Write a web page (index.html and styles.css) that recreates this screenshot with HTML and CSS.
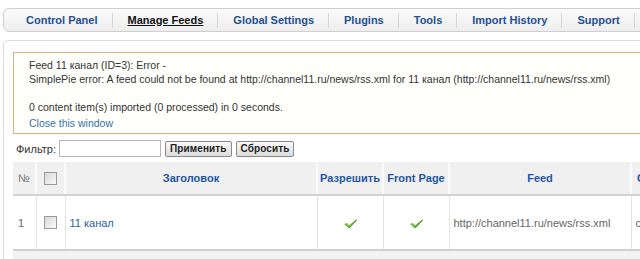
FILE: index.html
```html
<!DOCTYPE html>
<html>
<head>
<meta charset="utf-8">
<link rel="stylesheet" href="styles.css">
</head>
<body>
<div class="nav">
  <a class="nav-item">Control Panel</a>
  <a class="nav-item active">Manage Feeds</a>
  <a class="nav-item">Global Settings</a>
  <a class="nav-item">Plugins</a>
  <a class="nav-item">Tools</a>
  <a class="nav-item">Import History</a>
  <a class="nav-item">Support</a>
</div>
<div class="panel">
  <div class="message">
    <p>Feed 11 канал (ID=3): Error -</p>
    <p>SimplePie error: A feed could not be found at http://channel11.ru/news/rss.xml for 11 канал (http://channel11.ru/news/rss.xml)</p>
    <p>&nbsp;</p>
    <p>0 content item(s) imported (0 processed) in 0 seconds.</p>
    <p class="close"><a>Close this window</a></p>
  </div>
  <div class="filter">
    <span class="filter-label">Фильтр:</span>
    <input class="filter-input" type="text">
    <button class="btn">Применить</button>
    <button class="btn">Сбросить</button>
  </div>
  <table class="grid">
    <colgroup>
      <col class="c-num"><col class="c-chk"><col class="c-title"><col class="c-en"><col class="c-fp"><col class="c-feed"><col class="c-more">
    </colgroup>
    <thead>
      <tr>
        <th class="num">№</th>
        <th><span class="checkbox"></span></th>
        <th>Заголовок</th>
        <th>Разрешить</th>
        <th>Front Page</th>
        <th>Feed</th>
        <th class="more">C</th>
      </tr>
    </thead>
    <tbody>
      <tr>
        <td class="num">1</td>
        <td class="center"><span class="checkbox"></span></td>
        <td><a class="link">11 канал</a></td>
        <td class="center"><svg class="tick" width="15" height="11" viewBox="0 0 16 12"><path d="M1 6.5 L4 5.5 L6.5 8 L14 1.5 L15 2.5 L7 11 L5.5 11 Z" fill="#78bd45"/><path d="M5.5 11 L7 11 L15 2.5 L14.5 2 Z" fill="#4a9628"/></svg></td>
        <td class="center"><svg class="tick" width="15" height="11" viewBox="0 0 16 12"><path d="M1 6.5 L4 5.5 L6.5 8 L14 1.5 L15 2.5 L7 11 L5.5 11 Z" fill="#78bd45"/><path d="M5.5 11 L7 11 L15 2.5 L14.5 2 Z" fill="#4a9628"/></svg></td>
        <td class="feed">http://channel11.ru/news/rss.xml</td>
        <td class="feed">c</td>
      </tr>
    </tbody>
  </table>
  <div class="footer-strip"></div>
</div>
</body>
</html>
```
FILE: styles.css
```css
html, body {
  margin: 0;
  padding: 0;
  background: #fff;
  overflow: hidden;
}
body {
  padding: 8px 0 0 3px;
  width: 760px;
  font-family: "Liberation Sans", Arial, sans-serif;
  font-size: 11px;
  color: #333;
}
.nav {
  display: flex;
  align-items: center;
  height: 22px;
  padding: 0 0 0 7px;
  border: 1px solid #cfcfcf;
  border-radius: 6px;
  background: linear-gradient(#fbfbfb, #eeeeee);
}
.nav-item {
  font-weight: bold;
  font-size: 11px;
  line-height: 15px;
  color: #1e4f95;
  padding: 0 14px 0 15px;
  border-right: 1px solid #d6d6d6;
  white-space: nowrap;
}
.nav-item.active {
  color: #111;
  text-decoration: underline;
}
.panel {
  margin-top: 8px;
  border: 1px solid #dcdcdc;
  border-radius: 5px;
  padding: 11px 0 0 9px;
  height: 300px;
}
.message {
  border: 1px solid #dcae7a;
  background: #fffffb;
  padding: 5px 15px 3px 15px;
  font-size: 10.5px;
}
.message p {
  margin: 0;
  line-height: 14px;
  white-space: nowrap;
}
.message p.close {
  margin-top: 2px;
}
.message a {
  color: #3672ad;
}
.filter {
  display: flex;
  align-items: center;
  height: 17px;
  margin-top: 6px;
  padding-left: 3px;
}
.filter-label {
  color: #333;
  margin-right: 3px;
}
.filter-input {
  width: 100px;
  height: 15px;
  margin: 0 4px 0 0;
  padding: 0;
  border: 1px solid #b5b5b5;
  background: #fff;
}
.btn {
  height: 16px;
  margin: 0 4px 0 0;
  padding: 0 4px;
  border: 1px solid #8a8a8a;
  border-radius: 2px;
  background: linear-gradient(#fafafa, #dcdcdc);
  font-family: "Liberation Sans", Arial, sans-serif;
  font-size: 10px;
  font-weight: bold;
  letter-spacing: 0.1px;
  color: #222;
  line-height: 14px;
}
.grid {
  margin-top: 5px;
  border-collapse: collapse;
  table-layout: fixed;
  width: 700px;
}
.c-num { width: 23px; }
.c-chk { width: 29px; }
.c-title { width: 252px; }
.c-en { width: 66px; }
.c-fp { width: 66px; }
.c-feed { width: 182px; }
.c-more { width: 82px; }
.grid th {
  height: 32px;
  padding: 0;
  background: #f0f0f0;
  border-left: 2px solid #fafafa;
  border-bottom: 2px solid #d2d2d2;
  color: #1f56a3;
  font-weight: bold;
  font-size: 11px;
  text-align: center;
  white-space: nowrap;
}
.grid th:first-child { border-left: 0; }
.grid th.num {
  color: #777;
  text-align: left;
  padding-left: 5px;
  font-weight: normal;
}
.grid th.more { text-align: left; padding-left: 5px; }
.grid td {
  height: 53px;
  padding: 0;
  border-left: 1px solid #e4e4e4;
  border-bottom: 2px solid #d0d0d0;
  white-space: nowrap;
  color: #555;
}
.grid td:first-child { border-left: 0; }
.grid td.num { padding-left: 5px; color: #666; }
.grid td.center { text-align: center; }
.grid td.feed { padding-left: 4px; color: #666; }
.grid td a.link { color: #2a62a6; padding-left: 4px; }
.checkbox {
  display: inline-block;
  width: 11px;
  height: 11px;
  border: 1px solid #9a9a9a;
  background: linear-gradient(135deg, #d8d8d8, #fafafa);
  vertical-align: middle;
}
.tick { vertical-align: middle; }
.footer-strip {
  height: 30px;
  background: #f2f2f2;
}
```
